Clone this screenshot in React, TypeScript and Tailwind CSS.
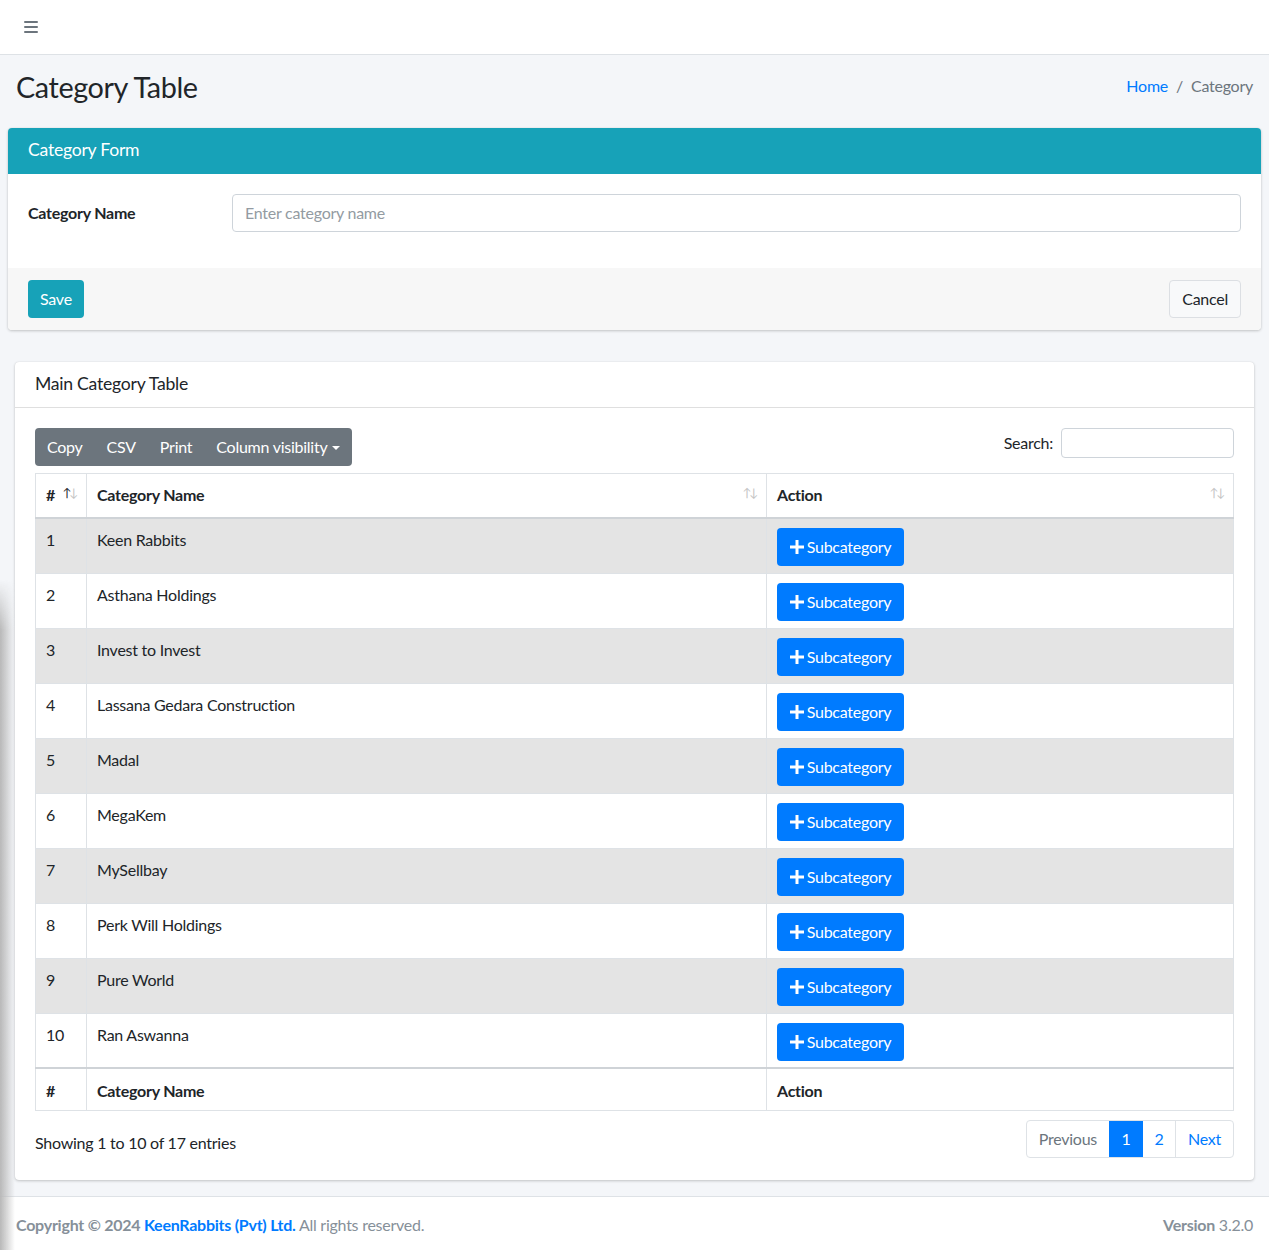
import React from 'react';

const rows = [
  'Keen Rabbits',
  'Asthana Holdings',
  'Invest to Invest',
  'Lassana Gedara Construction',
  'Madal',
  'MegaKem',
  'MySellbay',
  'Perk Will Holdings',
  'Pure World',
  'Ran Aswanna',
];

const SortIcon: React.FC<{ active?: boolean }> = ({ active }) => (
  <span className="absolute right-[8px] top-[13px] flex text-[12px] leading-none font-normal">
    <span className={active ? 'text-[#212529]' : 'text-[#c4c4c4]'}>↑</span>
    <span className="-ml-[2px] text-[#c4c4c4]">↓</span>
  </span>
);

const PlusIcon = () => (
  <svg width="14" height="14" viewBox="0 0 14 14" className="mr-[3px]">
    <path d="M5.5 0h3v5.5H14v3H8.5V14h-3V8.5H0v-3h5.5z" fill="white" />
  </svg>
);

export default function App() {
  return (
    <div className="relative min-h-screen bg-[#f4f6f9] font-['Lato',sans-serif] text-[16px] tracking-[-0.25px] text-[#212529]">
      {/* Navbar */}
      <nav className="flex h-[55px] items-center border-b border-[#dee2e6] bg-white px-[24px]">
        <svg width="14" height="12" viewBox="0 0 14 12">
          <rect x="0" y="0" width="14" height="2" rx="1" fill="#6c757d" />
          <rect x="0" y="5" width="14" height="2" rx="1" fill="#6c757d" />
          <rect x="0" y="10" width="14" height="2" rx="1" fill="#6c757d" />
        </svg>
      </nav>

      {/* Content header */}
      <div className="flex items-center justify-between px-[16px] pt-[15px]">
        <h1 className="text-[28.8px] leading-[1.2] tracking-[-0.4px] text-[#212529]">Category Table</h1>
        <div className="-mt-[3px] flex items-center gap-[8px] text-[16px]">
          <span className="text-[#007bff]">Home</span>
          <span className="text-[#6c757d]">/</span>
          <span className="text-[#6c757d]">Category</span>
        </div>
      </div>

      {/* Category form card */}
      <div className="mx-[8px] mt-[23px] overflow-hidden rounded-[4px] bg-white shadow-[0_0_1px_rgba(0,0,0,0.125),0_1px_3px_rgba(0,0,0,0.2)]">
        <div className="flex h-[46px] items-center bg-[#17a2b8] px-[20px] text-[17.6px] text-white">Category Form</div>
        <div className="flex h-[94px] items-start px-[20px] pt-[20px]">
          <label className="w-[204px] pt-[7px] font-bold leading-[24px]">Category Name</label>
          <div className="flex h-[38px] flex-1 items-center rounded-[4px] border border-[#ced4da] px-[12px] text-[#939ba2]">
            Enter category name
          </div>
        </div>
        <div className="flex h-[62px] items-center justify-between bg-[#f7f7f7] px-[20px]">
          <button className="h-[38px] rounded-[4px] bg-[#17a2b8] px-[12px] text-white">Save</button>
          <button className="h-[38px] rounded-[4px] border border-[#dcdfe3] bg-[#f8f9fa] px-[12px] text-[#212529]">Cancel</button>
        </div>
      </div>

      {/* Main category table */}
      <div className="px-[15px] pt-[32px]">
        <div className="rounded-[4px] bg-white shadow-[0_0_1px_rgba(0,0,0,0.125),0_1px_3px_rgba(0,0,0,0.2)]">
          <div className="flex h-[46px] items-center border-b border-[rgba(0,0,0,0.125)] px-[20px] text-[17.6px]">
            Main Category Table
          </div>
          <div className="p-[20px] pb-[22px]">
            <div className="flex items-start justify-between">
              <div className="flex h-[38px] items-center rounded-[4px] bg-[#6c757d] text-white">
                <span className="px-[12px]">Copy</span>
                <span className="px-[12px]">CSV</span>
                <span className="px-[12px]">Print</span>
                <span className="flex items-center px-[12px]">
                  Column visibility
                  <span className="ml-[5px] mt-[2px] h-0 w-0 border-x-[4px] border-t-[4px] border-x-transparent border-t-white" />
                </span>
              </div>
              <div className="flex items-center gap-[8px]">
                <span>Search:</span>
                <div className="h-[30px] w-[173px] rounded-[4px] border border-[#ced4da]" />
              </div>
            </div>

            <table className="mt-[7px] w-full table-fixed border-collapse border border-[#dee2e6]">
              <colgroup>
                <col className="w-[51px]" />
                <col className="w-[680px]" />
                <col />
              </colgroup>
              <thead>
                <tr className="h-[45px] border-b-2 border-[#cfd3d7] text-left">
                  <th className="relative border-r border-[#dee2e6] px-[10px] font-bold">
                    #
                    <SortIcon active />
                  </th>
                  <th className="relative border-r border-[#dee2e6] px-[10px] font-bold">
                    Category Name
                    <SortIcon />
                  </th>
                  <th className="relative px-[10px] font-bold">
                    Action
                    <SortIcon />
                  </th>
                </tr>
              </thead>
              <tbody>
                {rows.map((name, i) => (
                  <tr key={i} className={`h-[55px] ${i % 2 === 0 ? 'bg-[#e4e4e4]' : 'bg-white'}`}>
                    <td className="border-r border-t border-[#dee2e6] px-[10px] pt-[9px] align-top leading-[24px]">{i + 1}</td>
                    <td className="border-r border-t border-[#dee2e6] px-[10px] pt-[9px] align-top leading-[24px]">{name}</td>
                    <td className="border-t border-[#dee2e6] px-[10px] pt-[9px] align-top">
                      <button className="flex h-[38px] w-[127px] items-center justify-center rounded-[4px] bg-[#007bff] text-white">
                        <PlusIcon />
                        Subcategory
                      </button>
                    </td>
                  </tr>
                ))}
              </tbody>
              <tfoot>
                <tr className="h-[42px] border-t-2 border-[#cfd3d7] text-left">
                  <th className="border-r border-[#dee2e6] px-[10px] pt-[3px] font-bold">#</th>
                  <th className="border-r border-[#dee2e6] px-[10px] pt-[3px] font-bold">Category Name</th>
                  <th className="px-[10px] pt-[3px] font-bold">Action</th>
                </tr>
              </tfoot>
            </table>

            <div className="mt-[9px] flex items-start justify-between">
              <span className="pt-[11px] leading-[24px]">Showing 1 to 10 of 17 entries</span>
              <div className="flex h-[38px] overflow-hidden rounded-[4px] border border-[#dee2e6]">
                <span className="flex items-center px-[12px] text-[#6c757d]">Previous</span>
                <span className="flex w-[34px] items-center justify-center bg-[#007bff] text-white">1</span>
                <span className="flex w-[33px] items-center justify-center border-r border-[#dee2e6] text-[#007bff]">2</span>
                <span className="flex items-center px-[12px] text-[#007bff]">Next</span>
              </div>
            </div>
          </div>
        </div>
      </div>

      {/* Footer */}
      <footer className="mt-[16px] flex items-center justify-between border-t border-[#dee2e6] bg-white px-[16px] py-[16px] text-[#869099]">
        <span>
          <strong>Copyright © 2024 </strong>
          <strong className="text-[#007bff]">KeenRabbits (Pvt) Ltd.</strong> All rights reserved.
        </span>
        <span>
          <strong>Version</strong> 3.2.0
        </span>
      </footer>

      {/* sidebar shadow */}
      <div className="pointer-events-none absolute bottom-0 left-0 top-[580px] w-[15px] bg-gradient-to-r from-[#b8b8b8] to-transparent [mask-image:linear-gradient(to_bottom,transparent,black_50px)]" />
    </div>
  );
}
